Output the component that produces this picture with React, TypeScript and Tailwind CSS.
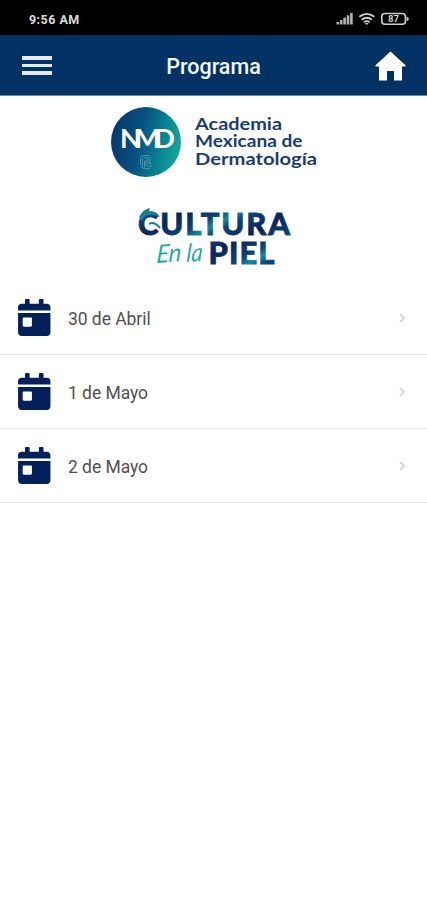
import { FaCalendarDay } from 'react-icons/fa';

const dias = ['30 de Abril', '1 de Mayo', '2 de Mayo'];

function StatusBar() {
  return (
    <div className="flex h-[35px] items-center justify-between bg-black pr-[17px] pl-[29px] pt-[3px]">
      <span className="pt-[2px] text-[12.5px] leading-none font-bold tracking-[0.45px] text-[#dcdcdc]">9:56 AM</span>
      <svg width="74" height="14" viewBox="0 0 74 14" fill="none">
        {/* señal */}
        <g fill="#b4b4b4">
          <rect x="0.5" y="10" width="2.6" height="2.5" />
          <rect x="3.9" y="8" width="2.6" height="4.5" />
          <rect x="7.3" y="5.7" width="2.6" height="6.8" />
          <rect x="10.7" y="3.3" width="2.6" height="9.2" />
          <rect x="14.1" y="1" width="2.6" height="11.5" />
        </g>
        {/* wifi */}
        <g stroke="#cfcfcf" strokeWidth="1.8">
          <path d="M23.3 4.8Q30.8 -1 38.3 4.8" />
          <path d="M25.7 7.7Q30.8 3.7 35.9 7.7" />
          <path d="M28 10.2Q30.8 8 33.6 10.2" />
        </g>
        <path d="M29 11h3.6l-1.8 2z" fill="#cfcfcf" />
        {/* batería */}
        <rect x="45.8" y="1.5" width="23.6" height="10.8" rx="3" stroke="#cfcfcf" strokeWidth="1.6" />
        <path d="M70.6 4.6q2.2 0.7 2.2 2.3t-2.2 2.3z" fill="#cfcfcf" />
        <text x="57.6" y="10" textAnchor="middle" fontSize="8.5" fontWeight="700" fill="#cfcfcf" textLength="11" lengthAdjust="spacingAndGlyphs">
          87
        </text>
      </svg>
    </div>
  );
}

function Header() {
  return (
    <header className="flex h-[61px] items-center justify-between border-b border-[#6f8bb3] bg-[#023164] pr-[21px] pl-[22px]">
      <button type="button" className="flex w-[30px] flex-col gap-[4px] pt-px">
        <span className="h-[3.5px] w-full bg-[#e2ebf7]" />
        <span className="h-[3.5px] w-full bg-[#e2ebf7]" />
        <span className="h-[3.5px] w-full bg-[#e2ebf7]" />
      </button>
      <h1 className="pt-[4px] text-[21.5px] leading-none font-medium text-[#f5f8fc]">Programa</h1>
      <svg width="31" height="30" viewBox="0 0 31 30" className="mt-px">
        <path d="M15.5 0.5L30.5 14.2V15.5H27V29.5H19V20H12V29.5H4V15.5H0.5V14.2Z" fill="#fff" />
      </svg>
    </header>
  );
}

function LogoAcademia() {
  return (
    <svg width="208" height="72" viewBox="0 0 208 72" fontFamily="Lato, sans-serif">
      <defs>
        <linearGradient id="circulo" x1="0" y1="0.4" x2="1" y2="0.6">
          <stop offset="0" stopColor="#06386b" />
          <stop offset="0.4" stopColor="#075181" />
          <stop offset="0.75" stopColor="#078794" />
          <stop offset="1" stopColor="#16a99c" />
        </linearGradient>
      </defs>
      <circle cx="36" cy="36" r="35" fill="url(#circulo)" />
      {/* las letras comparten trazo */}
      <text x="10" y="42" fontSize="27.5" fontWeight="700" fill="#fff" letterSpacing="-6.6">
        NMD
      </text>
      {/* huella */}
      <g fill="none" stroke="#58a3b8" strokeWidth="0.8">
        <path d="M30.5 59V51.5Q30.5 49.5 33 49.5H37Q40 49.5 40 52V58" />
        <path d="M32.5 61V52.5Q33 51.5 35 51.5Q38 51.5 38 54V57L41.5 58.5" />
        <path d="M34.5 62V55Q36 53.5 36 56V59Q38 61 41.5 60.5" />
        <path d="M30.5 61.5Q36 63.5 40 62.5" />
      </g>
      <g fill="#1b3d70" fontSize="17.2" fontWeight="700">
        <text x="85" y="23.5" textLength="87" lengthAdjust="spacingAndGlyphs">Academia</text>
        <text x="85" y="41" textLength="107.5" lengthAdjust="spacingAndGlyphs">Mexicana de</text>
        <text x="85" y="58.5" textLength="122" lengthAdjust="spacingAndGlyphs">Dermatología</text>
      </g>
    </svg>
  );
}

function LogoCultura() {
  return (
    <svg width="156" height="68" viewBox="0 0 156 68" fontFamily="Lato, sans-serif">
      <defs>
        <linearGradient id="titulo" gradientUnits="userSpaceOnUse" x1="0" y1="4" x2="12" y2="26" spreadMethod="reflect">
          <stop offset="0" stopColor="#168a9b" />
          <stop offset="0.3" stopColor="#0c4478" />
          <stop offset="1" stopColor="#0b2357" />
        </linearGradient>
      </defs>
      <g fill="url(#titulo)" stroke="url(#titulo)" strokeWidth="0.8" fontWeight="900" fontSize="31">
        <text x="1" y="29" textLength="152" lengthAdjust="spacing">CULTURA</text>
        <text x="71.5" y="58" textLength="66" lengthAdjust="spacing">PIEL</text>
      </g>
      <path d="M2 11Q6 3 13 2L12 5Q19 4 23 11Q15 7 9 10Q6 12 5 15Z" fill="#137f99" />
      <path d="M12 18Q17 15 23 22" fill="none" stroke="#137f99" strokeWidth="2" />
      {/* trazo manuscrito */}
      <g fill="#25aaa4" fontStyle="italic" fontSize="25" fontWeight="400">
        <text x="19" y="57" textLength="25" lengthAdjust="spacingAndGlyphs" transform="rotate(-4 19 57) skewX(-8) translate(8 0)">En</text>
        <text x="49" y="56" textLength="16" lengthAdjust="spacingAndGlyphs" transform="rotate(-4 49 56) skewX(-8) translate(8 0)">la</text>
      </g>
    </svg>
  );
}

export default function App() {
  return (
    <div className="min-h-[900px] w-full bg-white font-[Roboto,sans-serif]">
      <StatusBar />
      <Header />

      <div className="flex h-[185px] flex-col items-center">
        <div className="mt-[10px] ml-[1px] h-[72px] w-[208px]">
          <LogoAcademia />
        </div>
        <div className="mt-[28px] ml-[2px] h-[68px] w-[156px]">
          <LogoCultura />
        </div>
      </div>

      <ul>
        {dias.map((dia) => (
          <li key={dia} className="flex h-[74px] items-center border-b border-[#e6e6e6] pr-[21px] pl-[18px]">
            <FaCalendarDay className="h-[37px] w-[32.5px] text-[#03205a]" />
            <span className="ml-[17.5px] flex-1 pt-[4px] text-[17.5px] leading-none tracking-[-0.05px] text-[#505050]">{dia}</span>
            <svg width="8" height="10" viewBox="0 0 8 10" fill="none" stroke="#cccccc" strokeWidth="1.5">
              <path d="M2 1L6 5L2 9" />
            </svg>
          </li>
        ))}
      </ul>
    </div>
  );
}
